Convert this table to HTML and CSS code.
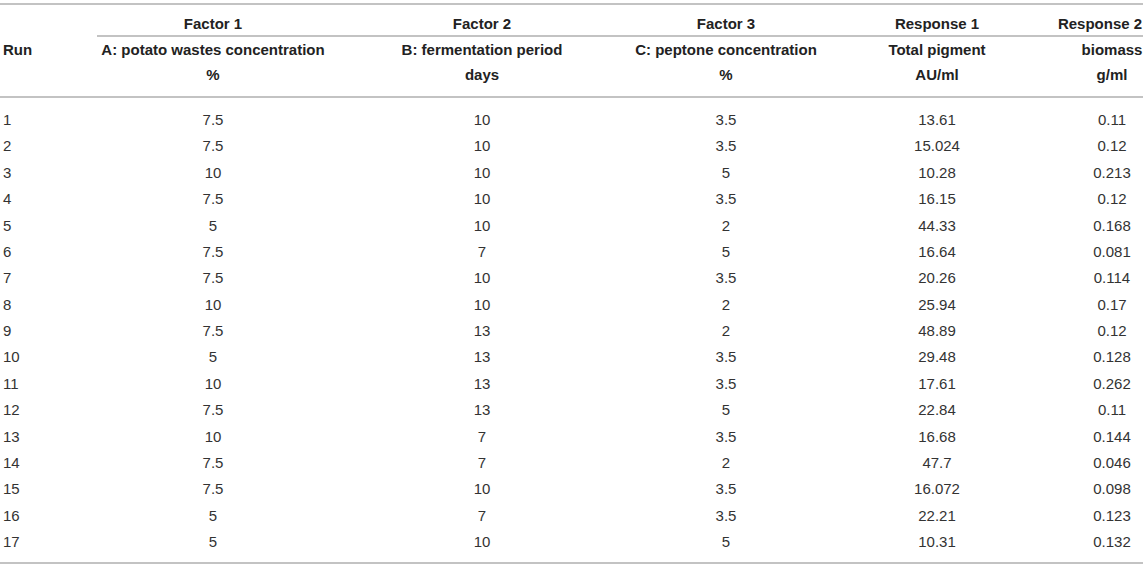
FILE: index.html
```html
<!DOCTYPE html>
<html lang="en">
<head>
<meta charset="utf-8">
<title>Table</title>
<link rel="stylesheet" href="styles.css">
</head>
<body>
<table class="data-table">
  <colgroup>
    <col class="col-run">
    <col class="col-f1">
    <col class="col-f2">
    <col class="col-f3">
    <col class="col-r1">
    <col class="col-r2">
  </colgroup>
  <thead>
    <tr class="head-group">
      <th class="run"></th>
      <th class="group">Factor 1</th>
      <th class="group">Factor 2</th>
      <th class="group">Factor 3</th>
      <th class="group">Response 1</th>
      <th class="group">Response 2</th>
    </tr>
    <tr class="head-name">
      <th class="run">Run</th>
      <th>A: potato wastes concentration</th>
      <th>B: fermentation period</th>
      <th>C: peptone concentration</th>
      <th>Total pigment</th>
      <th class="last">biomass</th>
    </tr>
    <tr class="head-unit">
      <th class="run"></th>
      <th>%</th>
      <th>days</th>
      <th>%</th>
      <th>AU/ml</th>
      <th class="last">g/ml</th>
    </tr>
  </thead>
  <tbody>
    <tr><td class="run">1</td><td>7.5</td><td>10</td><td>3.5</td><td>13.61</td><td class="last">0.11</td></tr>
    <tr><td class="run">2</td><td>7.5</td><td>10</td><td>3.5</td><td>15.024</td><td class="last">0.12</td></tr>
    <tr><td class="run">3</td><td>10</td><td>10</td><td>5</td><td>10.28</td><td class="last">0.213</td></tr>
    <tr><td class="run">4</td><td>7.5</td><td>10</td><td>3.5</td><td>16.15</td><td class="last">0.12</td></tr>
    <tr><td class="run">5</td><td>5</td><td>10</td><td>2</td><td>44.33</td><td class="last">0.168</td></tr>
    <tr><td class="run">6</td><td>7.5</td><td>7</td><td>5</td><td>16.64</td><td class="last">0.081</td></tr>
    <tr><td class="run">7</td><td>7.5</td><td>10</td><td>3.5</td><td>20.26</td><td class="last">0.114</td></tr>
    <tr><td class="run">8</td><td>10</td><td>10</td><td>2</td><td>25.94</td><td class="last">0.17</td></tr>
    <tr><td class="run">9</td><td>7.5</td><td>13</td><td>2</td><td>48.89</td><td class="last">0.12</td></tr>
    <tr><td class="run">10</td><td>5</td><td>13</td><td>3.5</td><td>29.48</td><td class="last">0.128</td></tr>
    <tr><td class="run">11</td><td>10</td><td>13</td><td>3.5</td><td>17.61</td><td class="last">0.262</td></tr>
    <tr><td class="run">12</td><td>7.5</td><td>13</td><td>5</td><td>22.84</td><td class="last">0.11</td></tr>
    <tr><td class="run">13</td><td>10</td><td>7</td><td>3.5</td><td>16.68</td><td class="last">0.144</td></tr>
    <tr><td class="run">14</td><td>7.5</td><td>7</td><td>2</td><td>47.7</td><td class="last">0.046</td></tr>
    <tr><td class="run">15</td><td>7.5</td><td>10</td><td>3.5</td><td>16.072</td><td class="last">0.098</td></tr>
    <tr><td class="run">16</td><td>5</td><td>7</td><td>3.5</td><td>22.21</td><td class="last">0.123</td></tr>
    <tr><td class="run">17</td><td>5</td><td>10</td><td>5</td><td>10.31</td><td class="last">0.132</td></tr>
  </tbody>
</table>
</body>
</html>
```
FILE: styles.css
```css
html, body {
  margin: 0;
  padding: 0;
  background: #ffffff;
}

body {
  font-family: "Liberation Sans", Arial, Helvetica, sans-serif;
  font-size: 15px;
  color: #333333;
}

.data-table {
  margin-top: 3px;
  width: 1143px;
  table-layout: fixed;
  border-collapse: separate;
  border-spacing: 0;
  border-top: 2px solid #c3c3c3;
  border-bottom: 2px solid #c3c3c3;
}

.col-run { width: 97px; }
.col-f1 { width: 232px; }
.col-f2 { width: 306px; }
.col-f3 { width: 182px; }
.col-r1 { width: 240px; }
.col-r2 { width: 86px; }

.data-table th,
.data-table td {
  padding: 0;
  text-align: center;
  white-space: nowrap;
  line-height: 18px;
}

.data-table th {
  font-weight: bold;
  color: #222222;
}

.data-table .run {
  text-align: left;
  padding-left: 3px;
}

.head-group th {
  padding-top: 10px;
  padding-bottom: 2px;
}

.head-group th.group {
  border-bottom: 2px solid #c3c3c3;
}

.head-name th {
  padding-top: 4px;
  padding-bottom: 3px;
}

.head-unit th {
  padding-top: 4px;
  padding-bottom: 12px;
  border-bottom: 2px solid #c3c3c3;
}

.data-table tbody td {
  padding-top: 4.2px;
  padding-bottom: 4.2px;
}

.data-table .last {
  padding-left: 24px;
}

.data-table tbody tr:first-child td {
  padding-top: 13px;
}

.data-table tbody tr:last-child td {
  padding-bottom: 11px;
}
```
